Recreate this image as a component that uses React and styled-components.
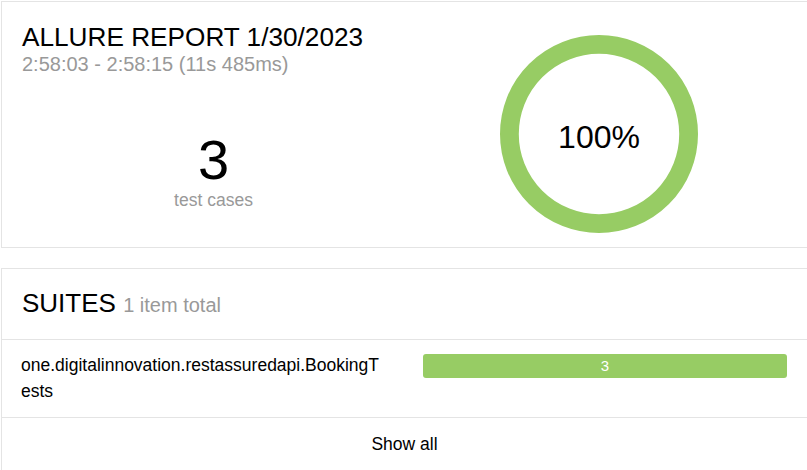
import React from "react";
import styled, { createGlobalStyle } from "styled-components";

const Global = createGlobalStyle`
  html, body {
    margin: 0;
    padding: 0;
    background: #fff;
    overflow: hidden;
    font-family: "Liberation Sans", Arial, sans-serif;
    color: #000;
  }
`;

const Page = styled.div`
  padding: 1px 0 0 1px;
  width: 807px;
`;

const Card = styled.section`
  box-sizing: border-box;
  width: 807px;
  border: 1px solid #e4e4e4;
  background: #fff;
  margin-bottom: 20px;
`;

const SummaryCard = styled(Card)`
  display: grid;
  grid-template-columns: 383px 1fr;
  padding: 20px 20px 14px;
`;

const LeftCol = styled.div`
  display: flex;
  flex-direction: column;
`;

const Title = styled.h2`
  margin: 0;
  font-size: 26.2px;
  line-height: 30px;
  font-weight: 400;
`;

const Subtitle = styled.div`
  font-size: 20px;
  line-height: 24px;
  color: #999;
`;

const Stat = styled.div`
  margin-top: 56px;
  display: flex;
  flex-direction: column;
  align-items: center;
`;

const StatValue = styled.div`
  font-size: 56px;
  line-height: 56px;
`;

const StatLabel = styled.div`
  margin-top: 2px;
  font-size: 17.5px;
  line-height: 21px;
  color: #999;
`;

const RightCol = styled.div`
  display: flex;
  justify-content: center;
  padding-left: 6px;
  padding-top: 13px;
`;

const Donut = () => (
  <svg width="198" height="198" viewBox="0 0 198 198">
    <circle cx="99" cy="99" r="89.6" fill="none" stroke="#97cc64" strokeWidth="18.8" />
    <text
      x="99"
      y="113"
      textAnchor="middle"
      fontSize="32"
      fontFamily="Liberation Sans, Arial, sans-serif"
      fill="#000"
    >
      100%
    </text>
  </svg>
);

const Header = styled.div`
  padding: 19px 20px 21px;
  border-bottom: 1px solid #e4e4e4;
`;

const HeaderTitle = styled.h2`
  margin: 0;
  font-size: 26px;
  line-height: 30px;
  font-weight: 400;
`;

const Count = styled.span`
  font-size: 20px;
  line-height: 20px;
  color: #999;
`;

const Row = styled.div`
  display: grid;
  grid-template-columns: 362px 1fr;
  column-gap: 40px;
  align-items: start;
  padding: 12px 20px 12px 19px;
  border-bottom: 1px solid #e4e4e4;
`;

const Name = styled.div`
  font-size: 17.5px;
  line-height: 26.25px;
  word-break: break-all;
`;

const Bar = styled.div`
  margin-top: 2px;
  height: 24px;
  border-radius: 3px;
  background: #97cc64;
  color: #fff;
  font-size: 15px;
  line-height: 23px;
  text-align: center;
`;

const ShowAll = styled.div`
  padding: 13px 20px;
  text-align: center;
  font-size: 17.5px;
  line-height: 26.25px;
`;

export default function App() {
  return (
    <>
      <Global />
      <Page>
        <SummaryCard>
          <LeftCol>
            <Title>ALLURE REPORT 1/30/2023</Title>
            <Subtitle>2:58:03 - 2:58:15 (11s 485ms)</Subtitle>
            <Stat>
              <StatValue>3</StatValue>
              <StatLabel>test cases</StatLabel>
            </Stat>
          </LeftCol>
          <RightCol>
            <Donut />
          </RightCol>
        </SummaryCard>
        <Card>
          <Header>
            <HeaderTitle>
              SUITES <Count>1 item total</Count>
            </HeaderTitle>
          </Header>
          <Row>
            <Name>one.digitalinnovation.restassuredapi.BookingTests</Name>
            <Bar>3</Bar>
          </Row>
          <ShowAll>Show all</ShowAll>
        </Card>
      </Page>
    </>
  );
}
